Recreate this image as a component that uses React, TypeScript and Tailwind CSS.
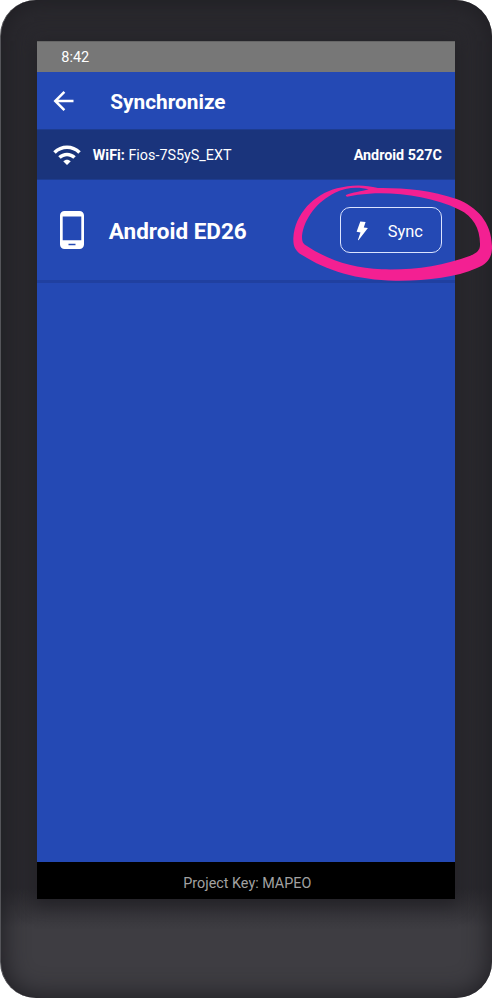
import React from "react";

function BackArrow() {
  return (
    <svg viewBox="0 0 24 24" className="h-[30px] w-[31px]" fill="currentColor">
      <path d="M20 11H7.83l5.59-5.59L12 4l-8 8 8 8 1.41-1.41L7.83 13H20v-2z" />
    </svg>
  );
}

function WifiIcon() {
  return (
    <svg viewBox="0 0 24 24" className="h-[30px] w-[30px]" fill="currentColor">
      <path d="M1 9l2 2c4.97-4.97 13.03-4.97 18 0l2-2C16.93 2.93 7.08 2.93 1 9zm8 8l3 3 3-3c-1.65-1.66-4.34-1.66-6 0zm-4-4l2 2c2.76-2.76 7.24-2.76 10 0l2-2C15.14 9.14 8.87 9.14 5 13z" />
    </svg>
  );
}

function PhoneIcon() {
  return (
    <svg viewBox="0 0 24 38" className="h-[38px] w-6" fill="currentColor" fillRule="evenodd">
      <path d="M4.500 0h15A4.500 4.500 0 0 1 24 4.500v29a4.500 4.500 0 0 1-4.500 4.500h-15A4.500 4.500 0 0 1 0 33.500v-29A4.500 4.500 0 0 1 4.500 0zM2.700 5.500v23.800h18.600V5.500zM8.500 32.700v1.600h7v-1.600z" />
    </svg>
  );
}

function BoltIcon() {
  return (
    <svg viewBox="0 0 12 20" className="mt-[2px] h-5 w-3" fill="currentColor">
      <path d="M4.300.6 9.600.9 7.800 6.500 11.900 7.100 2.500 19.200 1.900 18.900 4.500 11.500.6 10.800z" />
    </svg>
  );
}

function MarkerCircle() {
  return (
    <svg viewBox="0 0 630 360" className="pointer-events-none absolute left-[282px] top-[170px] h-[120px] w-[210px]" fill="#f32092" fillRule="evenodd">
      <path d="M288 54C246 43 205 44 165 55C95 74 39 131 34 204C33 231 41 243 60 255C134 302 224 330 340 332C432 333 519 323 585 294C617 281 631 262 630 228C628 157 586 111 524 87C447 60 360 53 288 54ZM192 75C211 67 238 65 260 58C228 49 191 52 159 68C106 94 66 145 60 198C60 211 61 219 70 225C137 270 211 294 300 298C391 301 482 288 565 257C585 249 594 240 594 225C595 176 573 138 532 119C449 80 350 66 262 71C236 72 217 75 195 80Q190 78 192 75Z" />
    </svg>
  );
}

export default function App() {
  return (
    <div className="relative h-[998px] w-[492px] overflow-hidden bg-white font-['Roboto','Noto_Sans',sans-serif] text-white">
      <div className="flex h-full w-full flex-col rounded-[36px] border-l border-[#55555a] bg-linear-to-b from-[#2a292e] from-89% to-[#3e3d42] to-93% pl-[36.300px] pr-[36.700px] pt-[41px] shadow-[inset_0_0_24px_2px_#1f1e23]">
        <main className="flex h-[858px] w-[418px] flex-col bg-[#2449b4] shadow-[0_3px_16px_3px_#232227]">
          <div className="flex h-[31px] shrink-0 items-center border-t border-[#666] bg-[#777] pl-6 pt-[2px] text-[14.500px]">
            <span>8:42</span>
          </div>
          <header className="flex h-[57px] shrink-0 items-center pl-[11px]">
            <BackArrow />
            <h1 className="ml-[31px] pt-[3px] text-[20.800px] font-bold leading-6">Synchronize</h1>
          </header>
          <section className="flex h-[51px] shrink-0 items-center border-y border-[#1d3c90] bg-[#1a347c] pl-[15px] pr-[13.500px] text-[14.350px]">
            <WifiIcon />
            <p className="ml-[10.500px] pt-[3px]"><b>WiFi:</b> Fios-7S5yS_EXT</p>
            <b className="ml-auto pt-[3px]">Android 527C</b>
          </section>
          <section className="flex h-[103px] shrink-0 items-center border-b-[3px] border-[#2040a0] pl-[23px] pr-[13px]">
            <PhoneIcon />
            <h2 className="ml-[24.500px] pt-[4px] text-[22.500px] font-bold">Android ED26</h2>
            <button className="ml-auto flex h-[46px] w-[102.500px] items-center rounded-[10px] border border-[#dce4ff] pl-[15px] text-[16.400px]">
              <BoltIcon />
              <span className="ml-5 pt-[5px]">Sync</span>
            </button>
          </section>
          <footer className="mt-auto flex h-[37px] shrink-0 items-center justify-center bg-black pl-[2px] pt-[6px] text-[14.350px] text-[#a2a2a2]">
            Project Key: MAPEO
          </footer>
        </main>
      </div>
      <MarkerCircle />
    </div>
  );
}
